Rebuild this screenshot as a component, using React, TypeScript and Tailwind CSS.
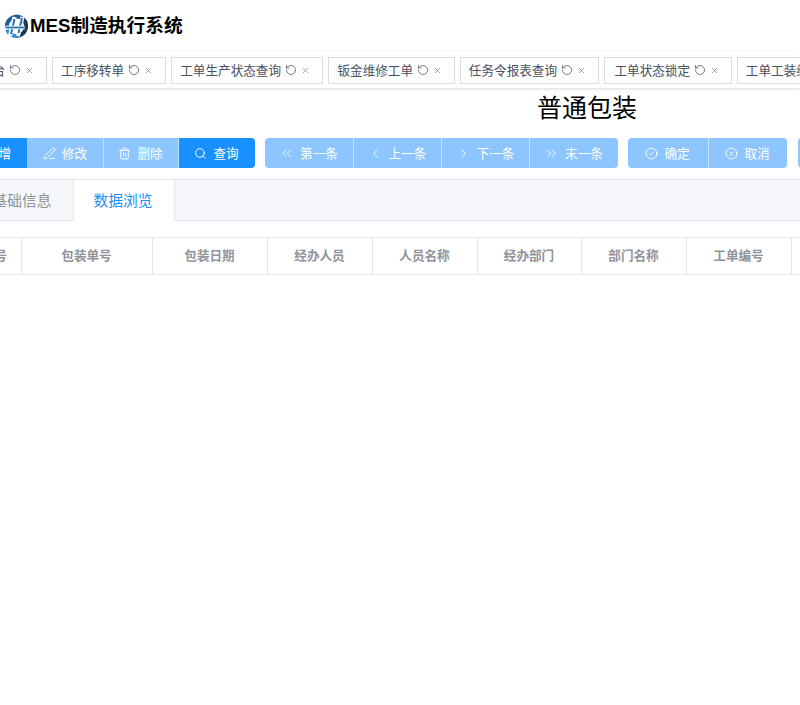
import { Check, ChevronLeft, ChevronRight, ChevronsLeft, ChevronsRight, PenLine, RotateCcw, Search, Trash2, X, CircleCheck, CircleX } from "lucide-react";
import type { ReactNode } from "react";

const font = { fontFamily: '"Noto Sans CJK SC", "Liberation Sans", sans-serif' };

const tags = [
  { label: "工作台", width: "w-[77px]" },
  { label: "工序移转单", width: "w-[114px]" },
  { label: "工单生产状态查询", width: "w-[152px]" },
  { label: "钣金维修工单", width: "w-[127px]" },
  { label: "任务令报表查询", width: "w-[139px]" },
  { label: "工单状态锁定", width: "w-[128px]" },
  { label: "工单工装维修单", width: "w-[139px]" },
];

const columns = [
  { label: "序号", width: "w-[53px]" },
  { label: "包装单号", width: "w-[131px]" },
  { label: "包装日期", width: "w-[115px]" },
  { label: "经办人员", width: "w-[105px]" },
  { label: "人员名称", width: "w-[105px]" },
  { label: "经办部门", width: "w-[104px]" },
  { label: "部门名称", width: "w-[105px]" },
  { label: "工单编号", width: "w-[105px]" },
  { label: "备注", width: "w-[105px]" },
];

function Logo() {
  return (
    <svg width="24" height="24" viewBox="0 0 24 24" className="shrink-0 mr-[2px]">
      <path d="M3 14A9.800 9.800 0 0 1 19 5" fill="none" stroke="#1f5f99" strokeWidth="4" />
      <path d="M19 5A9.800 9.800 0 0 1 15 21.500" fill="none" stroke="#16395c" strokeWidth="4" />
      <path d="M15 21.500A9.800 9.800 0 0 1 3 15.500" fill="none" stroke="#3b8fd0" strokeWidth="4" />
      <path d="M10.500 3 6 22M18.500 3 14 22" fill="none" stroke="#fff" strokeWidth="4" />
      <path d="M10.500 5 7 20M18 4 14.500 19" fill="none" stroke="#2a70ad" strokeWidth="2" />
      <path d="M1.500 13.500h19" fill="none" stroke="#fff" strokeWidth="3.600" />
      <path d="M2 13.500h18" fill="none" stroke="#2a70ad" strokeWidth="1.800" />
    </svg>
  );
}

function Btn({ icon, label, width, dark, first, last }: { icon: ReactNode; label: string; width: string; dark?: boolean; first?: boolean; last?: boolean }) {
  return (
    <button
      className={`${width} h-[30px] pr-[1px] flex items-center justify-center gap-[6px] text-white text-[12.6px] border-r border-r-white/50 last:border-r-0 ${dark ? "bg-[#1890ff]" : "bg-[#8cc5ff]"} ${first ? "rounded-l-[4px]" : ""} ${last ? "rounded-r-[4px]" : ""}`}
    >
      {icon}
      <span>{label}</span>
    </button>
  );
}

export default function App() {
  const ic = "w-[13px] h-[13px]";
  const sw = 1.75;
  return (
    <div className="w-[800px] h-[705px] overflow-hidden bg-white" style={font}>
      <div className="h-[52px] flex items-center pl-[4px]">
        <Logo />
        <span className="text-[18.7px] font-bold text-black leading-none" style={{ fontFamily: '"Liberation Sans", "Noto Sans CJK SC", sans-serif' }}>
          MES制造执行系统
        </span>
      </div>

      <div className="h-[36px] flex items-center gap-[5px] -ml-[30px] bg-white shadow-[0_1px_3px_rgba(0,0,0,0.15)]">
        {tags.map((t) => (
          <div
            key={t.label}
            className={`${t.width} shrink-0 h-[27px] flex items-center justify-end pr-[12px] gap-[4px] border border-[#d8dce5] bg-white text-[12.6px] text-[#495060]`}
          >
            <span className="whitespace-nowrap shrink-0">{t.label}</span>
            <RotateCcw className="w-[12px] h-[12px] shrink-0 text-[#495060]" strokeWidth={1.5} />
            <X className="w-[9px] h-[9px] shrink-0 text-[#808590]" strokeWidth={2} />
          </div>
        ))}
      </div>

      <div className="h-[50px] flex items-center justify-center pl-[374px] pb-[14px] text-[25px] text-black leading-none">普通包装</div>

      <div className="flex gap-[10px] -ml-[48px] w-[900px]">
        <div className="flex">
          <Btn first dark width="w-[76px]" icon={<Check className={ic} />} label="新增" />
          <Btn width="w-[76px]" icon={<PenLine className={ic} strokeWidth={sw} />} label="修改" />
          <Btn width="w-[75px]" icon={<Trash2 className={ic} strokeWidth={sw} />} label="删除" />
          <Btn last dark width="w-[76px]" icon={<Search className={ic} strokeWidth={sw} />} label="查询" />
        </div>
        <div className="flex">
          <Btn first width="w-[89px]" icon={<ChevronsLeft className="w-[15px] h-[15px]" strokeWidth={1.5} />} label="第一条" />
          <Btn width="w-[88px]" icon={<ChevronLeft className="w-[15px] h-[15px]" strokeWidth={1.5} />} label="上一条" />
          <Btn width="w-[88px]" icon={<ChevronRight className="w-[15px] h-[15px]" strokeWidth={1.5} />} label="下一条" />
          <Btn last width="w-[88px]" icon={<ChevronsRight className="w-[15px] h-[15px]" strokeWidth={1.5} />} label="末一条" />
        </div>
        <div className="flex">
          <Btn first width="w-[81px]" icon={<CircleCheck className={ic} strokeWidth={sw} />} label="确定" />
          <Btn last width="w-[78px]" icon={<CircleX className={ic} strokeWidth={sw} />} label="取消" />
        </div>
        <div className="flex ml-px">
          <Btn first width="w-[80px]" icon={<Check className={ic} />} label="保存" />
        </div>
      </div>

      <div className="mt-[11px] h-[42px] flex border border-[#e4e7ed] bg-[#f5f7fa] -ml-[30px] w-[900px]">
        <div className="w-[102px] flex items-center justify-center text-[14.7px] text-[#909399]">基础信息</div>
        <div className="w-[102px] -mb-px pr-[2px] flex items-center justify-center text-[14.7px] text-[#1890ff] bg-white border-x border-[#e4e7ed]">数据浏览</div>
      </div>

      <div className="mt-[16px] h-[38px] pb-[2px] flex border-y border-[#e4e7ed] -ml-[31px] w-[1000px]">
        {columns.map((c) => (
          <div key={c.label} className={`${c.width} shrink-0 pr-[2px] flex items-center justify-center text-[12.6px] font-bold text-[#909399] relative`}>
            {c.label}
            <span className="absolute right-0 top-0 -bottom-[2px] w-px bg-[#dfe6ec]" />
          </div>
        ))}
      </div>
    </div>
  );
}
